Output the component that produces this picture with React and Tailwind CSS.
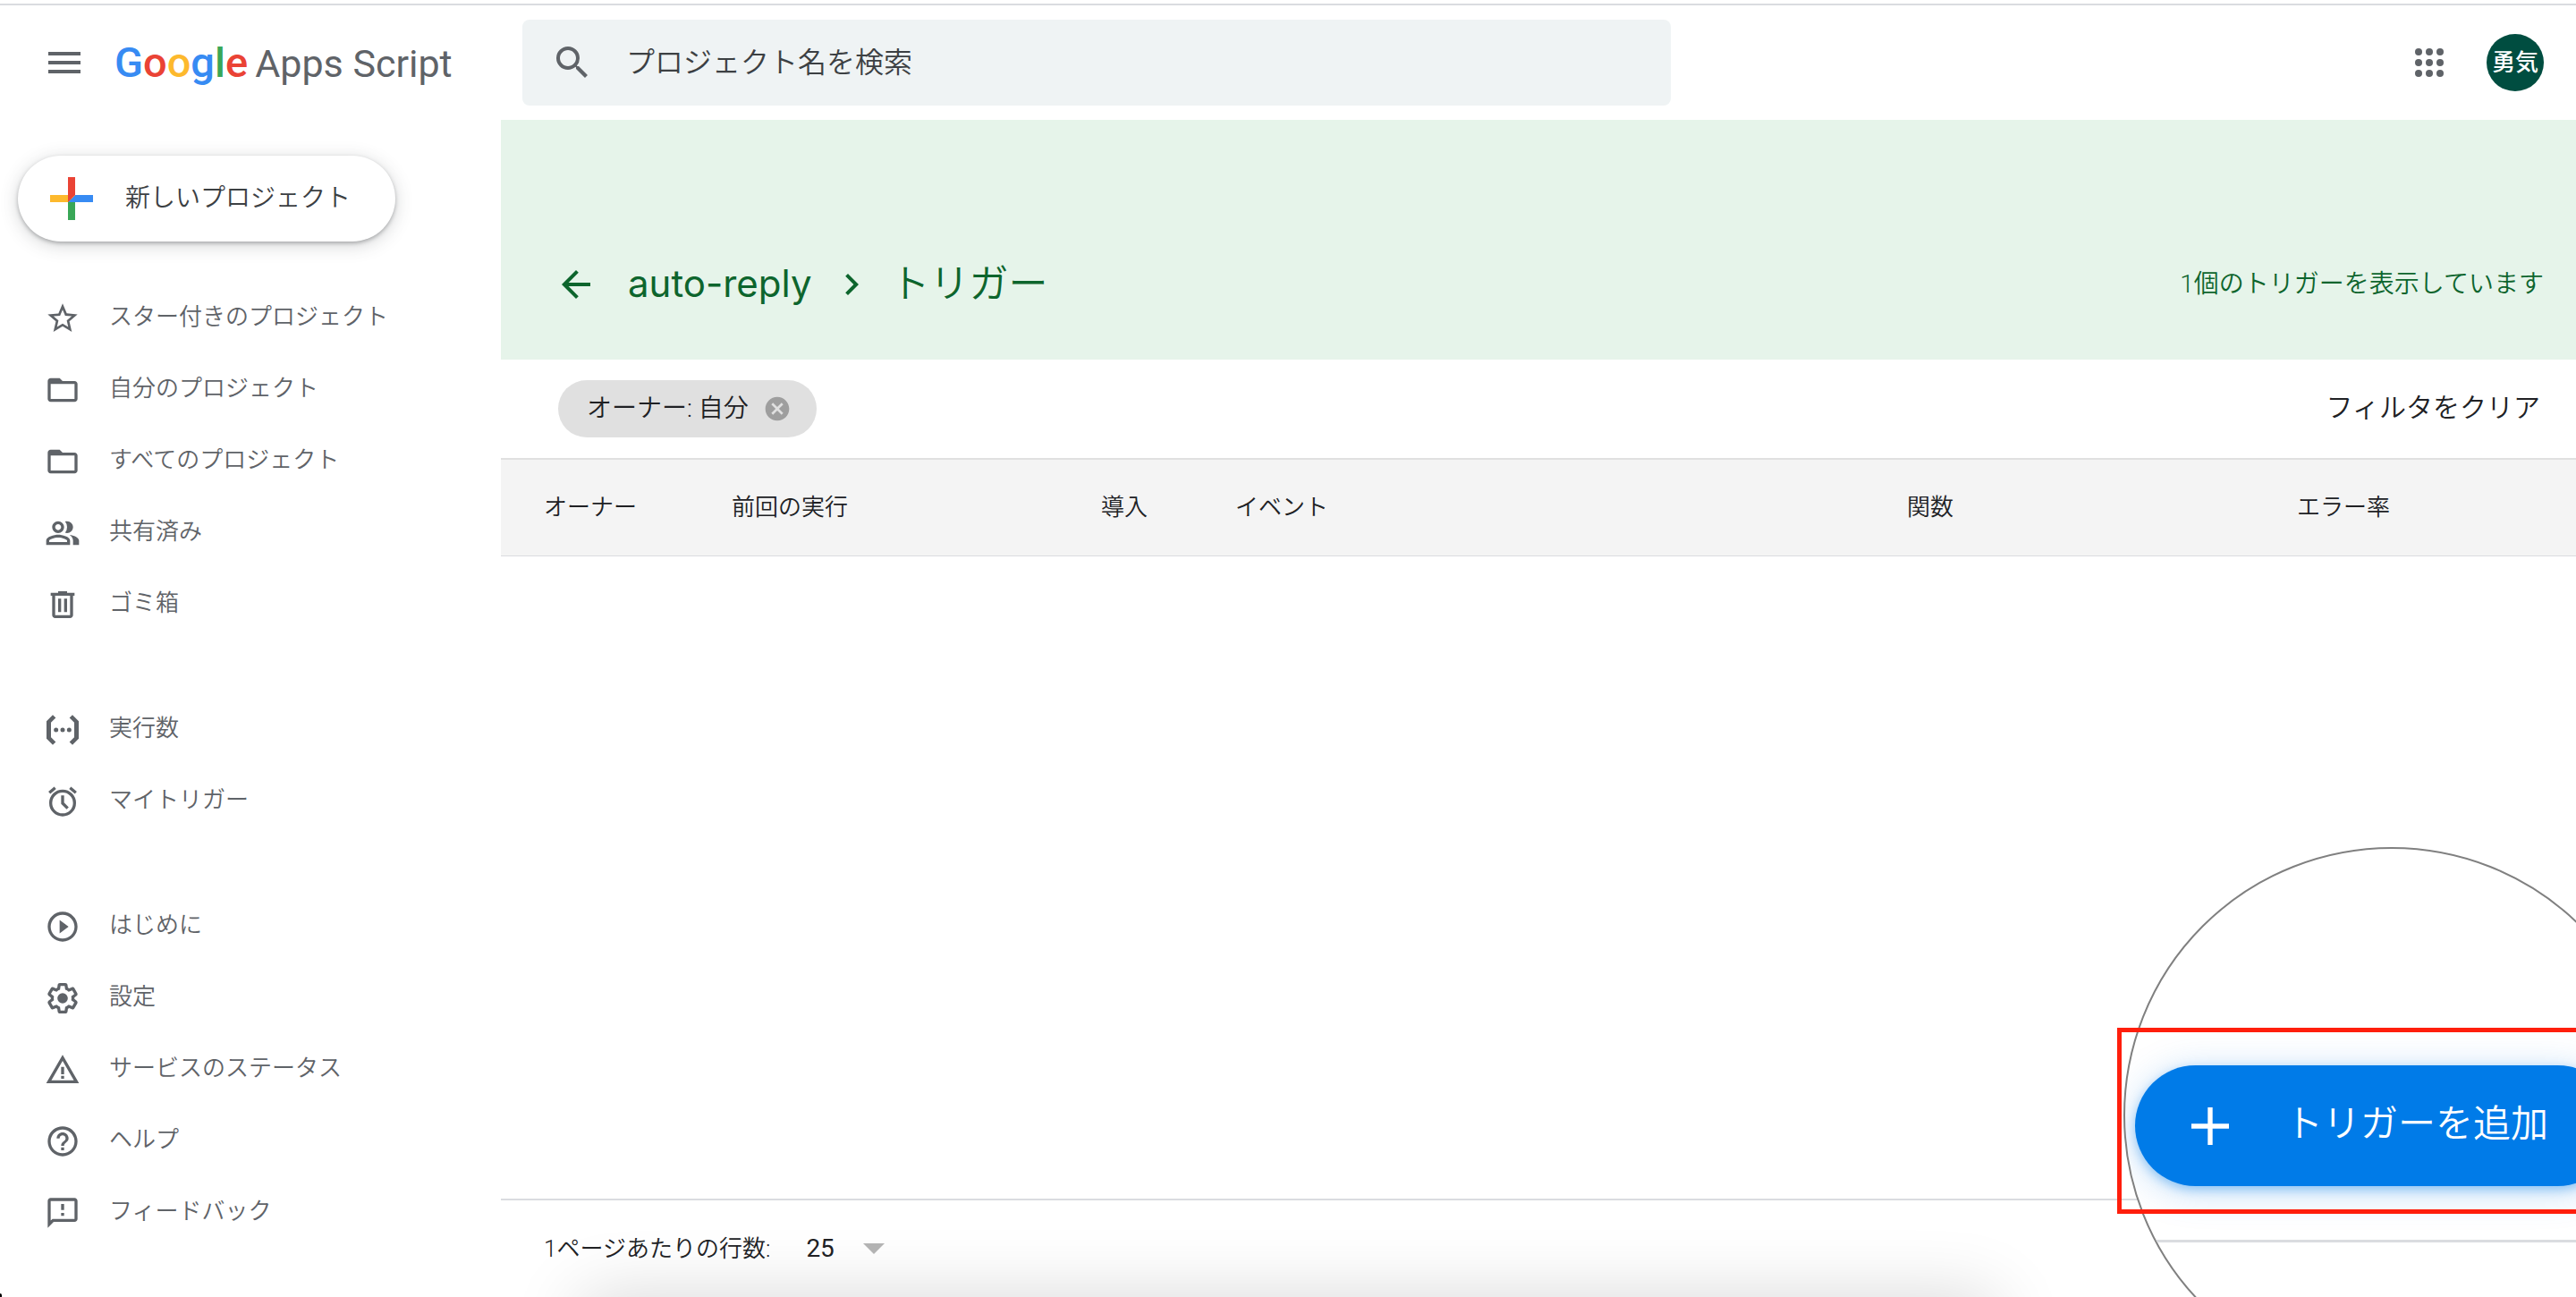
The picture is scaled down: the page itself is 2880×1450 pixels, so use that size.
import React, { useState } from 'react';
import {
    MdArrowBack,
    MdCancel,
    MdChevronRight,
    MdFolderOpen,
    MdHelpOutline,
    MdMenu,
    MdOutlineFeedback,
    MdOutlinePeopleAlt,
    MdPlayCircleOutline,
    MdSearch,
    MdStarBorder,
    MdWarningAmber,
} from 'react-icons/md';

function TrashIcon(props) {
    return (
        <svg viewBox="0 0 24 24" fill="currentColor" aria-hidden="true" {...props}>
            <path d="M15 4V3H9v1H4v2h1v13c0 1.1.9 2 2 2h10c1.1 0 2-.9 2-2V6h1V4h-5zm2 15H7V6h10v13zM9 8h2v9H9zm4 0h2v9h-2z" />
        </svg>
    );
}

function ExecutionsIcon(props) {
    return (
        <svg viewBox="0 0 24 24" fill="currentColor" aria-hidden="true" {...props}>
            <path d="M5.4 2 1.2 6.2v11.6L5.4 22l2-1.9-3.2-3.2V7.1l3.2-3.2zM18.6 2l4.2 4.2v11.6L18.6 22l-2-1.9 3.2-3.2V7.1l-3.2-3.2z" />
            <circle cx="7.6" cy="12" r="1.5" />
            <circle cx="12" cy="12" r="1.5" />
            <circle cx="16.4" cy="12" r="1.5" />
        </svg>
    );
}

function AlarmIcon(props) {
    return (
        <svg viewBox="0 0 24 24" fill="none" stroke="currentColor" strokeWidth="2" aria-hidden="true" {...props}>
            <circle cx="12" cy="13" r="8" />
            <path d="M12 8v5.2l3.4 3.4M3.1 6.2 7 2.9M20.9 6.2 17 2.9" />
        </svg>
    );
}

function GearIcon(props) {
    return (
        <svg viewBox="0 0 24 24" fill="currentColor" aria-hidden="true" {...props}>
            <path d="M13.85 22.25h-3.7c-.74 0-1.36-.54-1.45-1.27l-.27-1.89c-.27-.14-.53-.29-.79-.46l-1.8.72c-.7.26-1.47-.03-1.81-.65L2.2 15.53c-.35-.66-.2-1.44.36-1.88l1.53-1.19c-.01-.15-.02-.3-.02-.46 0-.15.01-.31.02-.46l-1.52-1.19c-.59-.45-.74-1.26-.37-1.88l1.85-3.19c.34-.62 1.11-.9 1.79-.63l1.81.73c.26-.17.52-.32.78-.46l.27-1.91c.09-.7.71-1.25 1.44-1.25h3.7c.74 0 1.36.54 1.45 1.27l.27 1.89c.27.14.53.29.79.46l1.8-.72c.71-.26 1.48.03 1.82.65l1.84 3.18c.36.66.2 1.44-.36 1.88l-1.52 1.19c.01.15.02.3.02.46s-.01.31-.02.46l1.52 1.19c.56.45.72 1.23.37 1.86l-1.86 3.22c-.34.62-1.11.9-1.8.63l-1.8-.72c-.26.17-.52.32-.78.46l-.27 1.91c-.1.68-.72 1.22-1.46 1.22zm-3.23-2h2.76l.37-2.55.53-.22c.44-.18.88-.44 1.34-.78l.45-.34 2.38.96 1.38-2.4-2.03-1.58.07-.56c.03-.26.06-.51.06-.78s-.03-.53-.06-.78l-.07-.56 2.03-1.58-1.39-2.4-2.39.96-.45-.35c-.42-.32-.87-.58-1.33-.77l-.52-.22-.37-2.55h-2.76l-.37 2.55-.53.21c-.44.19-.88.44-1.34.79l-.45.33-2.38-.95-1.39 2.39 2.03 1.58-.07.56a7 7 0 0 0-.06.79c0 .26.02.53.06.78l.07.56-2.03 1.58 1.38 2.4 2.39-.96.45.35c.43.33.86.58 1.33.77l.53.22.38 2.55z" />
            <circle cx="12" cy="12" r="3.5" />
        </svg>
    );
}

function NewProjectIcon(props) {
    return (
        <svg viewBox="0 0 36 36" aria-hidden="true" {...props}>
            <path fill="#39a757" d="M16 16v14h4V20z" />
            <path fill="#378bf3" d="M30 16H20l-4 4h14z" />
            <path fill="#fdb92d" d="M6 16v4h10l4-4z" />
            <path fill="#ea4335" d="M20 16V6h-4v14z" />
        </svg>
    );
}

function AppsIcon(props) {
    const steps = [6, 12, 18];
    return (
        <svg viewBox="0 0 24 24" fill="currentColor" aria-hidden="true" {...props}>
            {steps.map((y) => steps.map((x) => <circle key={`${x}-${y}`} cx={x} cy={y} r="2" />))}
        </svg>
    );
}

const NAV_GROUPS = [
    [
        { label: 'スター付きのプロジェクト', icon: MdStarBorder },
        { label: '自分のプロジェクト', icon: MdFolderOpen },
        { label: 'すべてのプロジェクト', icon: MdFolderOpen },
        { label: '共有済み', icon: MdOutlinePeopleAlt },
        { label: 'ゴミ箱', icon: TrashIcon },
    ],
    [
        { label: '実行数', icon: ExecutionsIcon },
        { label: 'マイトリガー', icon: AlarmIcon },
    ],
    [
        { label: 'はじめに', icon: MdPlayCircleOutline },
        { label: '設定', icon: GearIcon },
        { label: 'サービスのステータス', icon: MdWarningAmber },
        { label: 'ヘルプ', icon: MdHelpOutline },
        { label: 'フィードバック', icon: MdOutlineFeedback },
    ],
];

const COLUMNS = [
    { label: 'オーナー', className: 'w-[258px] pl-12' },
    { label: '前回の実行', className: 'w-[413px]' },
    { label: '導入', className: 'w-[150px]' },
    { label: 'イベント', className: '' },
    { label: '関数', className: 'w-[436px]' },
    { label: 'エラー率', className: 'w-[312px]' },
];

function Header() {
    return (
        <header className="flex h-32 items-center pr-9">
            <div className="flex w-[584px] shrink-0 items-center gap-8 pl-12">
                <button aria-label="メインメニュー" className="text-[#5f6368]"><MdMenu className="size-12" /></button>
                <a href="#home" className="flex items-baseline gap-2 whitespace-nowrap text-[43px] leading-[56px] text-[#5f6368]">
                    <span className="text-[47px] font-medium">
                        <span className="text-[#378bf3]">G</span>
                        <span className="text-[#ea4335]">o</span>
                        <span className="text-[#fdb92d]">o</span>
                        <span className="text-[#378bf3]">g</span>
                        <span className="text-[#39a757]">l</span>
                        <span className="text-[#ea4335]">e</span>
                    </span>
                    <span>Apps Script</span>
                </a>
            </div>
            <form role="search" className="flex h-24 w-full max-w-[1284px] items-center gap-9 rounded-lg bg-[#eff3f4] px-8">
                <MdSearch className="size-12 shrink-0 text-[#5f6368]" />
                <input
                    type="text"
                    aria-label="プロジェクト名を検索"
                    placeholder="プロジェクト名を検索"
                    className="h-full min-w-0 flex-1 bg-transparent text-[32px] font-[350] text-[#3c4043] outline-none placeholder:text-[#3c4043]"
                />
            </form>
            <div className="ml-auto flex items-center gap-10">
                <button aria-label="Google アプリ" className="text-[#5f6368]"><AppsIcon className="size-12" /></button>
                <button className="size-16 rounded-full bg-[#004d40] text-[26px] font-medium text-white">勇気</button>
            </div>
        </header>
    );
}

function Sidebar() {
    return (
        <aside className="w-[560px] shrink-0 pt-10">
            <button className="ml-5 flex h-24 w-[422px] items-center gap-6 rounded-full bg-white pl-6 text-[28px] font-[350] text-[#3c4043] shadow-[0_2px_4px_rgba(60,64,67,0.35),0_4px_20px_rgba(60,64,67,0.22)]">
                <NewProjectIcon className="size-18" />
                新しいプロジェクト
            </button>
            <nav className="mt-[46px] flex flex-col gap-[60px]">
                {NAV_GROUPS.map((group, i) => (
                    <ul key={i}>
                        {group.map(({ label, icon: Icon }) => (
                            <li key={label}>
                                <a href="#nav" className="flex h-20 items-center gap-8 pl-[50px] text-[26px] font-[350] text-[#5f6368]">
                                    <Icon className="size-10 shrink-0" />
                                    <span className="pb-1">{label}</span>
                                </a>
                            </li>
                        ))}
                    </ul>
                ))}
            </nav>
        </aside>
    );
}

function Banner() {
    return (
        <div className="flex h-[268px] items-end justify-between bg-[#e6f4ea] pr-9 pl-[60px] text-[#0d652d]">
            <div className="flex h-[168px] items-center text-[44px] font-[350]">
                <a href="#back" aria-label="戻る"><MdArrowBack className="size-12" /></a>
                <a href="#project" className="ml-[34px] pb-1 font-['Inter',sans-serif] text-[42px] font-normal">auto-reply</a>
                <MdChevronRight className="mx-5 size-12" />
                <h1>トリガー</h1>
            </div>
            <p className="flex h-[168px] items-center text-[28px] font-[350]">1個のトリガーを表示しています</p>
        </div>
    );
}

function Footer() {
    const [rows, setRows] = useState('25');
    return (
        <footer className="relative flex h-[110px] items-center overflow-hidden border-t-2 border-[#dadce0] pl-12 text-[26px] font-[350] text-[#202124]">
            <div className="absolute top-full right-[650px] left-[90px] h-20 shadow-[0_0_80px_rgba(0,0,0,0.16)]"></div>
            <label htmlFor="rows" className="relative">1ページあたりの行数:</label>
            <div className="relative ml-10 flex items-center">
                <select id="rows" value={rows} onChange={(e) => setRows(e.target.value)} className="w-[88px] appearance-none bg-transparent text-[28px] font-normal outline-none">
                    <option>10</option>
                    <option>25</option>
                    <option>50</option>
                </select>
                <svg viewBox="0 0 24 12" className="pointer-events-none absolute right-0 h-3 w-6 fill-[#b3b3b3]" aria-hidden="true"><path d="M0 0h24L12 12z" /></svg>
            </div>
        </footer>
    );
}

// Enlarged view of the floating "add trigger" button
function Magnifier() {
    return (
        <>
            <div className="absolute -right-[94px] -bottom-[97px] size-[600px] overflow-hidden rounded-full border-2 border-[#808080] bg-white pt-[242px]">
                <button className="ml-[11px] flex h-[135px] w-[540px] items-center rounded-full bg-[#007be8] pl-12 text-[42px] font-[350] text-white shadow-[0_4px_12px_rgba(0,123,232,0.35),0_6px_40px_rgba(0,123,232,0.25)]">
                    <svg viewBox="0 0 24 24" className="size-18" fill="currentColor" aria-hidden="true"><path d="M19 12.9h-6.1V19h-1.8v-6.1H5v-1.8h6.1V5h1.8v6.1H19z" /></svg>
                    <span className="ml-12 pb-1">トリガーを追加</span>
                </button>
                <div className="mt-[60px] h-[3px] bg-[#dadce0]"></div>
            </div>
            <div className="pointer-events-none absolute -right-2 bottom-[93px] h-[208px] w-[521px] border-5 border-[#ff1e0c]"></div>
        </>
    );
}

export default function App() {
    return (
        <div className="relative flex min-h-screen flex-col overflow-hidden bg-white font-['Roboto','Noto_Sans_CJK_JP',sans-serif]">
            <div className="mt-1 h-0.5 bg-[#dadce0]"></div>
            <Header />
            <div className="flex flex-1">
                <Sidebar />
                <main className="flex min-w-0 flex-1 flex-col">
                    <Banner />
                    <div className="flex h-[110px] items-center justify-between pr-10 pl-16 text-[#202124]">
                        <button className="flex h-16 items-center gap-4 rounded-full bg-[#e0e0e0] pr-7 pl-8 text-[28px] font-[350]">
                            オーナー: 自分
                            <MdCancel className="size-8 text-[#9e9e9e]" />
                        </button>
                        <button className="pb-1 text-[30px] font-[350]">フィルタをクリア</button>
                    </div>
                    <table className="w-full table-fixed border-t-2 border-[#e0e0e0] text-left text-[26px] text-[#202124]">
                        <thead>
                            <tr className="h-[108px] border-b border-[#dadce0] bg-[#f4f4f4]">
                                {COLUMNS.map((col) => (
                                    <th key={col.label} scope="col" className={`font-[350] ${col.className}`}>{col.label}</th>
                                ))}
                            </tr>
                        </thead>
                    </table>
                    <div className="flex-1"></div>
                    <Footer />
                </main>
            </div>
            <Magnifier />
            <div className="absolute bottom-0 left-0 h-1 w-0.5 rounded-tr-full bg-black"></div>
        </div>
    );
}
